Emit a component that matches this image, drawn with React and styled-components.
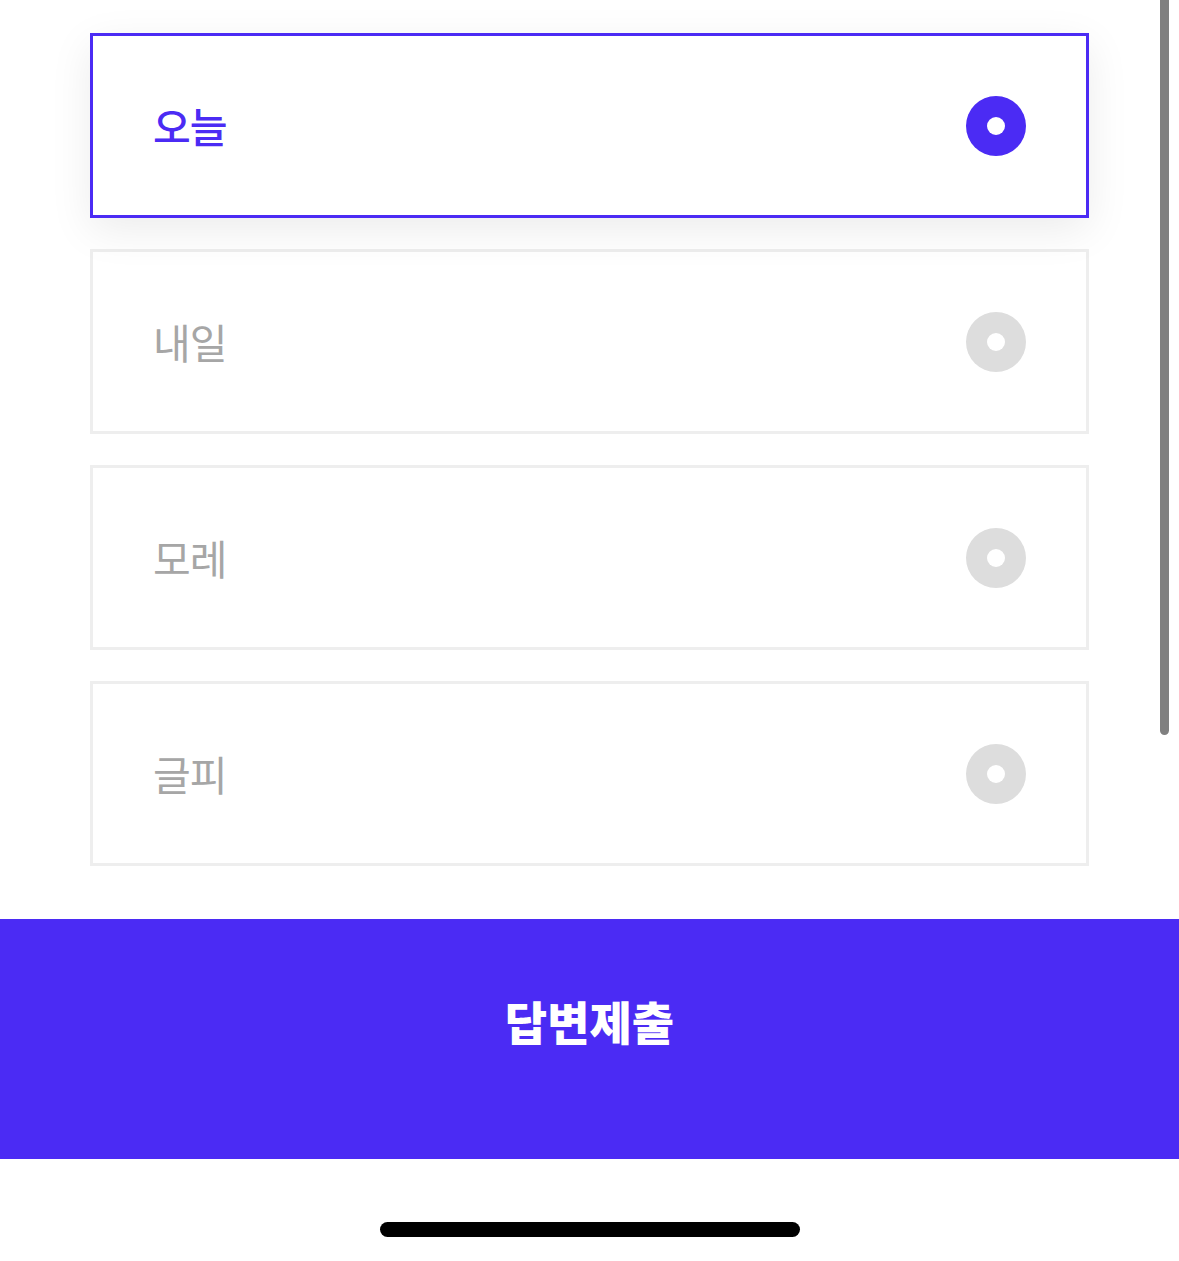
import React, { useState } from "react";
import styled, { createGlobalStyle } from "styled-components";

const PURPLE = "#4b2bf4";

const GlobalStyle = createGlobalStyle`
  html, body {
    margin: 0;
    padding: 0;
    background: #ffffff;
    font-family: "Noto Sans CJK KR", "Noto Sans", sans-serif;
  }
`;

const Screen = styled.div`
  position: relative;
  width: 1179px;
  height: 1261px;
  overflow: hidden;
  background: #fff;
  display: flex;
  flex-direction: column;
`;

const List = styled.div`
  display: flex;
  flex-direction: column;
  gap: 31px;
  padding: 33px 90px 0 90px;
`;

const Option = styled.div`
  box-sizing: border-box;
  width: 999px;
  height: 185px;
  display: flex;
  align-items: center;
  justify-content: space-between;
  padding: 0 60px 0 60px;
  background: #fff;
  border: 3px solid ${(p) => (p.$active ? PURPLE : "#eeeeee")};
  box-shadow: ${(p) => (p.$active ? "0 12px 40px rgba(0,0,0,0.08)" : "none")};
  position: relative;
  z-index: ${(p) => (p.$active ? 1 : 0)};
  cursor: pointer;
`;

const Label = styled.span`
  font-size: 41px;
  font-weight: ${(p) => (p.$active ? 500 : 400)};
  color: ${(p) => (p.$active ? PURPLE : "#a6a6a6")};
  letter-spacing: -1px;
  line-height: 1;
`;

const Radio = styled.span`
  box-sizing: border-box;
  width: 60px;
  height: 60px;
  border-radius: 50%;
  background: ${(p) => (p.$active ? PURPLE : "#dddddd")};
  display: flex;
  align-items: center;
  justify-content: center;
  &::after {
    content: "";
    width: 18px;
    height: 18px;
    border-radius: 50%;
    background: #fff;
  }
`;

const Submit = styled.button`
  margin-top: 53px;
  width: 100%;
  height: 240px;
  border: none;
  background: ${PURPLE};
  color: #fff;
  font-family: "Noto Sans CJK KR", sans-serif;
  font-size: 46px;
  font-weight: 900;
  letter-spacing: 0;
  display: flex;
  align-items: center;
  justify-content: center;
  padding-bottom: 40px;
`;

const HomeBar = styled.div`
  align-self: center;
  margin-top: 63px;
  width: 420px;
  height: 15px;
  border-radius: 8px;
  background: #000;
`;

const ScrollThumb = styled.div`
  position: absolute;
  top: 0;
  right: 10px;
  width: 9px;
  height: 735px;
  background: #808080;
  border-radius: 0 0 5px 5px;
`;

const options = ["오늘", "내일", "모레", "글피"];

export default function App() {
  const [selected, setSelected] = useState(0);
  return (
    <Screen>
      <GlobalStyle />
      <List>
        {options.map((o, i) => (
          <Option key={o} $active={selected === i} onClick={() => setSelected(i)}>
            <Label $active={selected === i}>{o}</Label>
            <Radio $active={selected === i} />
          </Option>
        ))}
      </List>
      <Submit type="button">답변제출</Submit>
      <HomeBar />
      <ScrollThumb />
    </Screen>
  );
}
